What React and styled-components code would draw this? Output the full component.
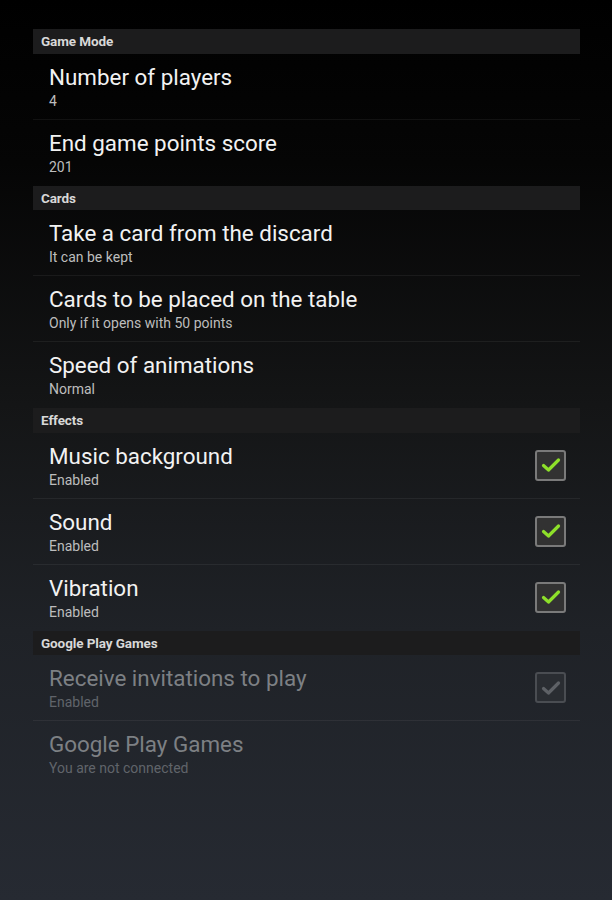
import React from "react";
import styled, { createGlobalStyle } from "styled-components";

const GlobalStyle = createGlobalStyle`
  html, body {
    margin: 0;
    padding: 0;
    background: #000;
  }
  body {
    font-family: Roboto, "Noto Sans", "Liberation Sans", sans-serif;
  }
`;

const Screen = styled.div`
  min-height: 900px;
  box-sizing: border-box;
  padding: 29px 32px 0 33px;
  background: linear-gradient(180deg, #000 0%, #050505 18%, #141516 45%, #1f2227 70%, #262a32 100%);
`;

const SectionHeader = styled.div`
  height: 24.5px;
  line-height: 24px;
  padding-left: 8px;
  background: #1c1c1d;
  color: #d8d8d8;
  font-size: 13.5px;
  font-weight: 700;
  letter-spacing: -0.1px;
`;

const Row = styled.div`
  display: flex;
  align-items: center;
  height: 66px;
  box-sizing: border-box;
  padding: 0 14px 0 16px;
  border-bottom: 1px solid ${(p) => (p.$last ? "transparent" : "rgba(255,255,255,0.06)")};
`;

const Texts = styled.div`
  flex: 1;
  display: flex;
  flex-direction: column;
`;

const Title = styled.div`
  font-size: 22.4px;
  line-height: 26px;
  color: ${(p) => (p.$disabled ? "#7d8084" : "#f2f2f2")};
`;

const Summary = styled.div`
  margin-top: 3px;
  font-size: 14px;
  line-height: 16px;
  color: ${(p) => (p.$disabled ? "#60646a" : "#bdbdbd")};
`;

const Check = styled.div`
  width: 27px;
  height: 27px;
  border: 2px solid ${(p) => (p.$disabled ? "#4a4d52" : "#7a7a7a")};
  border-radius: 3px;
  background: ${(p) => (p.$disabled ? "#2a2d32" : "#323232")};
  display: flex;
  align-items: center;
  justify-content: center;
`;

const CheckMark = ({ disabled }) => (
  <svg width="20" height="16" viewBox="0 0 20 16">
    <path
      d="M2.5 8.5 L7.5 13 L17.5 3"
      fill="none"
      stroke={disabled ? "#5e6166" : "#8ee02a"}
      strokeWidth="3.2"
      strokeLinecap="round"
      strokeLinejoin="round"
    />
  </svg>
);

const sections = [
  {
    title: "Game Mode",
    items: [
      { title: "Number of players", summary: "4" },
      { title: "End game points score", summary: "201" },
    ],
  },
  {
    title: "Cards",
    items: [
      { title: "Take a card from the discard", summary: "It can be kept" },
      { title: "Cards to be placed on the table", summary: "Only if it opens with 50 points" },
      { title: "Speed of animations", summary: "Normal" },
    ],
  },
  {
    title: "Effects",
    items: [
      { title: "Music background", summary: "Enabled", check: true },
      { title: "Sound", summary: "Enabled", check: true },
      { title: "Vibration", summary: "Enabled", check: true },
    ],
  },
  {
    title: "Google Play Games",
    items: [
      { title: "Receive invitations to play", summary: "Enabled", check: true, disabled: true },
      { title: "Google Play Games", summary: "You are not connected", disabled: true },
    ],
  },
];

export default function App() {
  return (
    <>
      <GlobalStyle />
      <Screen>
        {sections.map((section) => (
          <div key={section.title}>
            <SectionHeader>{section.title}</SectionHeader>
            {section.items.map((item, i) => (
              <Row key={item.title} $last={i === section.items.length - 1}>
                <Texts>
                  <Title $disabled={item.disabled}>{item.title}</Title>
                  <Summary $disabled={item.disabled}>{item.summary}</Summary>
                </Texts>
                {item.check && (
                  <Check $disabled={item.disabled}>
                    <CheckMark disabled={item.disabled} />
                  </Check>
                )}
              </Row>
            ))}
          </div>
        ))}
      </Screen>
    </>
  );
}
